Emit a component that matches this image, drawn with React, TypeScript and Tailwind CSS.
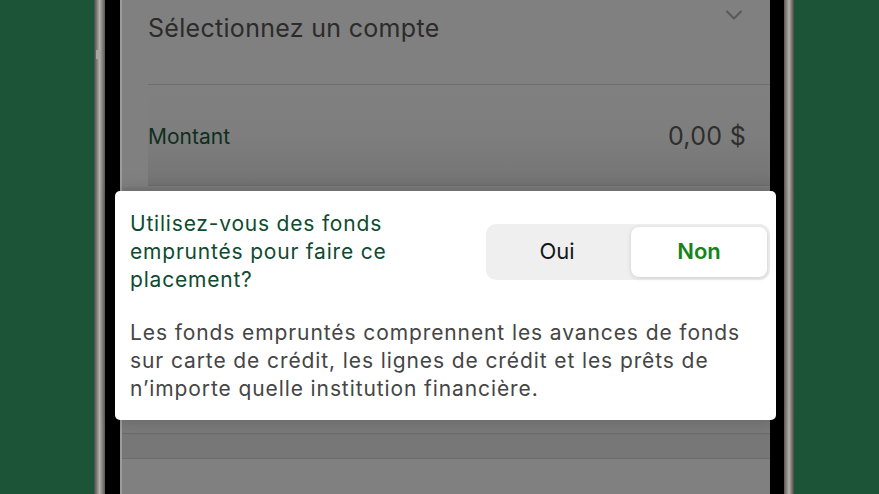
import { ChevronDown } from "lucide-react";

const font = { fontFamily: "Inter, 'Liberation Sans', sans-serif" };

export default function App() {
  return (
    <div
      className="relative flex h-[494px] w-[879px] overflow-hidden bg-[#1b5436] pl-[94px]"
      style={font}
    >
      {/* phone frame */}
      <div className="flex h-full">
        <div className="relative w-[11px] bg-linear-to-r from-[#4a4a46] via-[#b4b0aa] to-[#5c5a56]">
          <div className="absolute left-[2px] top-[50px] h-[9px] w-[4px] bg-[#a9a59f]" />
        </div>
        <div className="w-[15px] bg-black" />
        <div className="w-[2px] bg-[#9c9c9c]" />

        {/* screen */}
        <div className="flex w-[648px] flex-col bg-[#808080]">
          <div className="relative h-[86px] pl-[26px]">
            <div className="flex h-[85px] items-start border-b border-[#6e6e6e] pt-[12px]">
              <span className="text-[25px] leading-[33px] tracking-[0.3px] text-[#2b2b2b]">
                Sélectionnez un compte
              </span>
            </div>
            <ChevronDown
              className="absolute right-[22px] top-[1px] h-[28px] w-[28px] text-[#595959]"
              strokeWidth={1.8}
            />
          </div>

          <div className="h-[101px] pl-[26px]">
            <div className="flex h-[100px] items-center justify-between border-b border-[#6c6c6c] bg-linear-to-b from-[#808080] via-[#7e7e7e] to-[#747474] pr-[24px] pt-[3px]">
              <span className="text-[21px] text-[#0f2e1f]">Montant</span>
              <span className="text-[25px] tracking-[0.3px] text-[#2e2e2e]">0,00 $</span>
            </div>
          </div>

          <div className="h-[247px] border-b border-[#6a6a6a] bg-[#7a7a7a]" />
          <div className="h-[25px] border-b border-[#6c6c6c] bg-[#777777]" />
          <div className="flex-1 bg-[#808080]" />
        </div>

        <div className="w-[14px] bg-black" />
        <div className="w-[10px] bg-linear-to-r from-[#5c5a56] via-[#b4b0aa] to-[#4a4a46]" />
      </div>

      {/* dialog */}
      <div className="absolute left-[115px] top-[191px] flex h-[229px] w-[661px] flex-col rounded-[5px] bg-white pl-[15px] pr-[6px] pt-[19px] shadow-[0_0_18px_rgba(0,0,0,0.18)]">
        <div className="flex items-center justify-between">
          <p className="text-[21px] leading-[28px] tracking-[0.8px] text-[#0f4a31]">
            Utilisez-vous des fonds
            <br />
            empruntés pour faire ce
            <br />
            placement?
          </p>
          <div className="-mt-[1px] flex h-[56px] w-[284px] rounded-[10px] bg-[#efefef] p-[3px]">
            <button className="flex flex-1 items-center justify-center pr-[6px] text-[22px] text-[#161616]">
              Oui
            </button>
            <button className="flex w-[136px] items-center justify-center rounded-[8px] bg-white text-[22px] font-semibold text-[#16841a] shadow-[0_1px_4px_rgba(0,0,0,0.15)]">
              Non
            </button>
          </div>
        </div>

        <p className="mt-[25px] text-[21px] leading-[28px] tracking-[0.9px] text-[#454545]">
          Les fonds empruntés comprennent les avances de fonds
          <br />
          sur carte de crédit, les lignes de crédit et les prêts de
          <br />
          n’importe quelle institution financière.
        </p>
      </div>
    </div>
  );
}
